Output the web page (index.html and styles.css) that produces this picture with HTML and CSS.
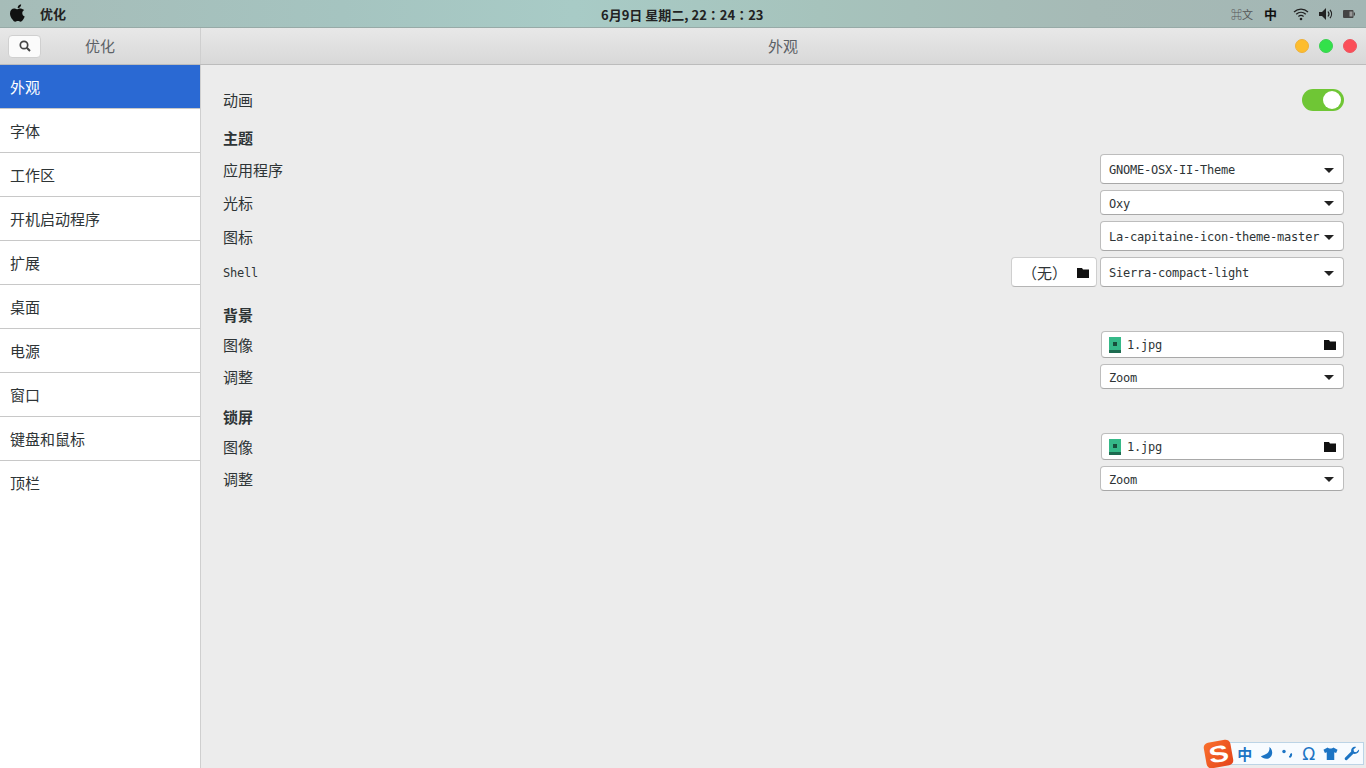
FILE: index.html
```html
<!DOCTYPE html>
<html lang="zh-CN">
<head>
  <meta charset="UTF-8" />
  <title>优化</title>
  <link rel="stylesheet" href="styles.css">
</head>
<body>
  <!-- Top bar -->
  <div class="topbar">
    <div class="top-left">
      <svg class="apple" width="16" height="18" viewBox="0 0 16 18"><path fill="#111" d="M11.1 0.2c0.1 1-0.3 2-0.9 2.7-0.6 0.7-1.5 1.3-2.5 1.2-0.1-1 0.4-2 0.9-2.6 0.6-0.7 1.7-1.2 2.5-1.3zM14.2 6c-1.5 0.9-1.9 2-1.9 3.2 0 1.5 0.9 2.7 2.4 3.3-0.4 1.2-1 2.3-1.7 3.3-0.7 1-1.4 1.9-2.5 1.9-1 0-1.4-0.6-2.6-0.6-1.2 0-1.6 0.6-2.6 0.6-1.1 0-1.9-1-2.6-2C0.8 13.700 0 11.500 0 9.500c0-3.200 2.100-4.900 4.100-4.900 1.100 0 2 0.700 2.700 0.700 0.700 0 1.700-0.800 3-0.800 1.600 0 3.300 0.700 4.400 1.500z"/></svg>
      <span class="app-name">优化</span>
    </div>
    <div class="clock" lang="zh-TW">6月9日 星期二, 22：24：23</div>
    <div class="top-right">
      <span class="ime-a">⌘文</span>
      <span class="ime-b">中</span>
      <svg width="16" height="14" viewBox="0 0 16 14"><g fill="none" stroke="#222" stroke-width="1.300"><path d="M1 5c4-3.800 10-3.800 14 0"/><path d="M3.200 7.300c2.800-2.500 6.800-2.500 9.600 0"/><path d="M5.400 9.500c1.500-1.300 3.700-1.300 5.200 0"/></g><circle cx="8" cy="12" r="1.300" fill="#222"/></svg>
      <svg width="14" height="14" viewBox="0 0 14 14"><path fill="#222" d="M0 5h3l4-4v12l-4-4H0z"/><g fill="none" stroke="#222" stroke-width="1.200"><path d="M9 4.500c1.100 1.400 1.100 3.600 0 5"/><path d="M11 2.800c2 2.400 2 6 0 8.400"/></g></svg>
      <svg width="12" height="8" viewBox="0 0 12 8"><rect x="0" y="0" width="10.500" height="8" rx="1" fill="#444"/><rect x="6.500" y="1.500" width="3" height="5" fill="#999"/><rect x="10.800" y="2.500" width="1.200" height="3" fill="#444"/></svg>
    </div>
  </div>

  <div class="window">
    <!-- Header -->
    <div class="header">
      <div class="header-left">
        <button class="search-btn">
          <svg width="12" height="12" viewBox="0 0 12 12"><circle cx="5" cy="5" r="3.700" fill="none" stroke="#444" stroke-width="1.700"/><path d="M7.800 7.800L11 11" stroke="#444" stroke-width="2"/></svg>
        </button>
        <span class="header-app">优化</span>
      </div>
      <div class="header-main">
        <span class="header-title">外观</span>
        <div class="dots">
          <span class="dot dot-yellow"></span>
          <span class="dot dot-green"></span>
          <span class="dot dot-red"></span>
        </div>
      </div>
    </div>

    <div class="body">
      <!-- Sidebar -->
      <ul class="sidebar">
        <li class="active">外观</li>
        <li>字体</li>
        <li>工作区</li>
        <li>开机启动程序</li>
        <li>扩展</li>
        <li>桌面</li>
        <li>电源</li>
        <li>窗口</li>
        <li>键盘和鼠标</li>
        <li class="last">顶栏</li>
      </ul>

      <!-- Settings -->
      <div class="content">
        <div class="row row-anim">
          <span>动画</span>
          <span class="switch"><span class="knob"></span></span>
        </div>

        <h4 class="heading">主题</h4>
        <div class="row row-tall">
          <span>应用程序</span>
          <div class="combo tall">GNOME-OSX-II-Theme<i class="arrow"></i></div>
        </div>
        <div class="row">
          <span>光标</span>
          <div class="combo">Oxy<i class="arrow"></i></div>
        </div>
        <div class="row row-tall">
          <span>图标</span>
          <div class="combo tall">La-capitaine-icon-theme-master<i class="arrow"></i></div>
        </div>
        <div class="row row-tall">
          <span class="latin">Shell</span>
          <div class="controls">
            <div class="file-none">（无）<svg class="folder" width="12" height="10" viewBox="0 0 12 10"><path fill="#111" d="M0 0h5l1 1.500h6V10H0z"/></svg></div>
            <div class="combo tall">Sierra-compact-light<i class="arrow"></i></div>
          </div>
        </div>

        <h4 class="heading heading-gap">背景</h4>
        <div class="row">
          <span>图像</span>
          <div class="file-pick">
            <svg class="thumb" width="12" height="16" viewBox="0 0 12 16"><rect width="12" height="16" fill="#35b988"/><rect y="13" width="12" height="3" fill="#1d6b50"/><rect x="4" y="5" width="4" height="4" fill="#174f3b"/></svg>
            <span class="file-name">1.jpg</span>
            <svg class="folder" width="12" height="10" viewBox="0 0 12 10"><path fill="#111" d="M0 0h5l1 1.500h6V10H0z"/></svg>
          </div>
        </div>
        <div class="row">
          <span>调整</span>
          <div class="combo">Zoom<i class="arrow"></i></div>
        </div>

        <h4 class="heading heading-gap">锁屏</h4>
        <div class="row">
          <span>图像</span>
          <div class="file-pick">
            <svg class="thumb" width="12" height="16" viewBox="0 0 12 16"><rect width="12" height="16" fill="#35b988"/><rect y="13" width="12" height="3" fill="#1d6b50"/><rect x="4" y="5" width="4" height="4" fill="#174f3b"/></svg>
            <span class="file-name">1.jpg</span>
            <svg class="folder" width="12" height="10" viewBox="0 0 12 10"><path fill="#111" d="M0 0h5l1 1.500h6V10H0z"/></svg>
          </div>
        </div>
        <div class="row">
          <span>调整</span>
          <div class="combo">Zoom<i class="arrow"></i></div>
        </div>
      </div>
    </div>
  </div>

  <!-- Sogou input bar -->
  <div class="sogou">
    <span class="sogou-logo"><span class="sogou-s">S</span></span>
    <span class="sogou-zh">中</span>
    <svg width="15" height="15" viewBox="0 0 16 16"><path fill="#1c74c4" d="M11 1c1 5-2 8-9 10 3 4 11 4 12-3 0.400-3-1-6-3-7z"/></svg>
    <svg width="12" height="12" viewBox="0 0 14 14"><circle cx="3.500" cy="4" r="2" fill="#1c74c4"/><path d="M11.500 6.500c0.800 1.500 0 3.300-1.800 4.200" fill="none" stroke="#1c74c4" stroke-width="2.400"/></svg>
    <span class="sogou-om">Ω</span>
    <svg width="15" height="15" viewBox="0 0 16 16"><path fill="#1c74c4" d="M5 1.500L0.500 4l1.500 3.500 2-0.800V15h8V6.700l2 0.800L15.500 4 11 1.500c-1 1.500-5 1.500-6 0z"/></svg>
    <svg width="16" height="16" viewBox="0 0 16 16"><path fill="#1c74c4" d="M15 3.500l-2.800 2.700-2.200-0.500-0.500-2.200L12.200 1c-2.500-0.800-5.500 1-5 4.500L1 11.700c-1 1 0.300 3.300 2 2.400l6.400-6.300c3.400 0.700 6.300-2 5.600-4.300z"/></svg>
  </div>
</body>
</html>
```

FILE: styles.css
```css
* {
  box-sizing: border-box;
}

html,
body {
  height: 100%;
}

body {
  margin: 0;
  overflow: hidden;
  display: flex;
  flex-direction: column;
  font-family: "Noto Sans CJK SC", "Noto Sans", sans-serif;
  font-size: 15px;
  color: #2e3436;
  background: #ececec;
}

/* top bar */
.topbar {
  height: 28px;
  flex: none;
  position: relative;
  display: flex;
  justify-content: space-between;
  align-items: center;
  padding: 0 0 0 10px;
  background: linear-gradient(90deg, #a6bcb8 0%, #a5c4c0 25%, #a8cbc6 42%, #a6c3bc 60%, #a6bab6 80%, #a3b6b4 100%);
  border-bottom: 1px solid #97aaa7;
}

.top-left {
  display: flex;
  align-items: center;
  gap: 14px;
}

.apple {
  margin-top: -2px;
}

.app-name {
  font-size: 13px;
  font-weight: 700;
  color: #222;
}

.clock {
  position: absolute;
  left: 601px;
  top: 5px;
  font-family: "Noto Sans CJK TC", "Noto Sans CJK SC", sans-serif;
  font-size: 13px;
  line-height: 19px;
  font-weight: 700;
  color: #222;
  white-space: nowrap;
}

.top-right {
  display: flex;
  align-items: center;
  margin-right: 11px;
  gap: 10px;
}

.ime-a {
  font-size: 11px;
  color: #555;
  margin-right: 1px;
}

.ime-b {
  font-size: 13px;
  font-weight: 700;
  color: #111;
  margin-right: 6px;
}

/* window */
.window {
  flex: 1;
  display: flex;
  flex-direction: column;
  min-height: 0;
}

.header {
  height: 37px;
  flex: none;
  display: flex;
  background: linear-gradient(#e8e8e8, #d8d8d8);
  border-bottom: 1px solid #bcbcbc;
}

.header-left {
  width: 201px;
  flex: none;
  display: flex;
  align-items: center;
  padding-left: 8px;
  border-right: 1px solid #cfcfcf;
}

.search-btn {
  width: 33px;
  height: 23px;
  padding: 0;
  display: flex;
  align-items: center;
  justify-content: center;
  background: #fbfbfb;
  border: 1px solid #d0d0d0;
  border-radius: 4px;
}

.header-app {
  margin-left: 44px;
  margin-top: -2px;
  color: #5c6166;
}

.header-main {
  flex: 1;
  position: relative;
  display: flex;
  align-items: center;
  justify-content: center;
}

.header-title {
  color: #5c6166;
  margin-right: 1px;
  margin-top: -2px;
}

.dots {
  position: absolute;
  right: 9px;
  top: 11px;
  display: flex;
  gap: 10px;
}

.dot {
  width: 14px;
  height: 14px;
  border-radius: 50%;
}

.dot-yellow {
  background: #fdbd2e;
  border: 1px solid #eeb13a;
}

.dot-green {
  background: #33e14a;
  border: 1px solid #3dd053;
}

.dot-red {
  background: #fb4e58;
  border: 1px solid #ee5560;
}

.body {
  flex: 1;
  display: flex;
  min-height: 0;
}

/* sidebar */
.sidebar {
  width: 201px;
  flex: none;
  margin: 0;
  padding: 0;
  list-style: none;
  background: #fff;
  border-right: 1px solid #cfcfcf;
}

.sidebar li {
  height: 44px;
  padding-left: 10px;
  line-height: 43px;
  color: #2e3436;
  border-bottom: 1px solid #c8c8c8;
}

.sidebar li.active {
  background: #2a69d3;
  color: #fff;
}

.sidebar li.last {
  border-bottom: none;
}

/* settings */
.content {
  flex: 1;
  padding: 24px 22px 0 22px;
  display: flex;
  flex-direction: column;
}

.row {
  display: flex;
  align-items: center;
  justify-content: space-between;
  margin-bottom: 6px;
  line-height: 20px;
  color: #2e3436;
}

.row-tall > span {
  padding-top: 2px;
}

.row-anim {
  height: 22px;
  margin-bottom: 0;
}

.latin {
  font-family: "DejaVu Sans Mono", monospace;
  font-size: 12px;
  letter-spacing: -0.220px;
}

.switch {
  width: 42px;
  height: 22px;
  position: relative;
  border-radius: 11px;
  background: #6fc635;
}

.knob {
  position: absolute;
  right: 3px;
  top: 2px;
  width: 18px;
  height: 18px;
  border-radius: 50%;
  background: #fff;
}

.heading {
  margin: 15px 0 5px;
  height: 23px;
  line-height: 23px;
  font-size: 15px;
  font-weight: 700;
  color: #2e3436;
}

.heading-gap {
  margin: 10px 0 5px;
}

.controls {
  display: flex;
  gap: 3px;
}

.combo {
  width: 244px;
  height: 25px;
  padding: 2px 9px 0 8px;
  display: flex;
  align-items: center;
  justify-content: space-between;
  background: #fff;
  border: 1px solid #bdbdbd;
  border-bottom-color: #a8a8a8;
  border-radius: 4px;
  font-family: "DejaVu Sans Mono", monospace;
  font-size: 12px;
  letter-spacing: -0.220px;
  color: #2e3436;
  white-space: nowrap;
}

.combo.tall {
  height: 30px;
}

.arrow {
  width: 0;
  height: 0;
  border-left: 5px solid transparent;
  border-right: 5px solid transparent;
  border-top: 5px solid #222;
}

.file-none {
  width: 86px;
  height: 30px;
  padding: 2px 7px 0 10px;
  display: flex;
  align-items: center;
  justify-content: space-between;
  background: #fff;
  border: 1px solid #cfcfcf;
  border-bottom-color: #b5b5b5;
  border-radius: 4px;
  color: #2e3436;
}

.file-pick {
  width: 243px;
  height: 27px;
  padding: 0 7px 0 7px;
  display: flex;
  align-items: center;
  background: #fff;
  border: 1px solid #bdbdbd;
  border-bottom-color: #a8a8a8;
  border-radius: 4px;
}

.thumb {
  flex: none;
}

.file-name {
  flex: 1;
  margin-left: 6px;
  font-family: "DejaVu Sans Mono", monospace;
  font-size: 12px;
  letter-spacing: -0.220px;
}

/* input method bar */
.sogou {
  position: absolute;
  left: 1226px;
  top: 742px;
  width: 138px;
  height: 23px;
  padding-left: 7px;
  display: grid;
  grid-template-columns: repeat(6, 21.400px);
  justify-items: center;
  align-items: center;
  background: #f7fbff;
  border: 1px solid #bcd4e6;
}

.sogou-logo {
  position: absolute;
  left: -22px;
  top: -2px;
  width: 27px;
  height: 26px;
  border-radius: 5px;
  transform: rotate(-10deg);
  background: linear-gradient(135deg, #f9702c, #e4431a);
  text-align: center;
}

.sogou-s {
  display: inline-block;
  transform: scaleX(1.300);
  color: #fff;
  font-family: "Liberation Sans", sans-serif;
  font-size: 23px;
  font-weight: 700;
  line-height: 26px;
}

.sogou-zh {
  font-size: 15px;
  font-weight: 700;
  line-height: 18px;
  color: #1c74c4;
}

.sogou-om {
  font-family: "DejaVu Sans", sans-serif;
  font-size: 17px;
  line-height: 18px;
  color: #1c74c4;
}
```
